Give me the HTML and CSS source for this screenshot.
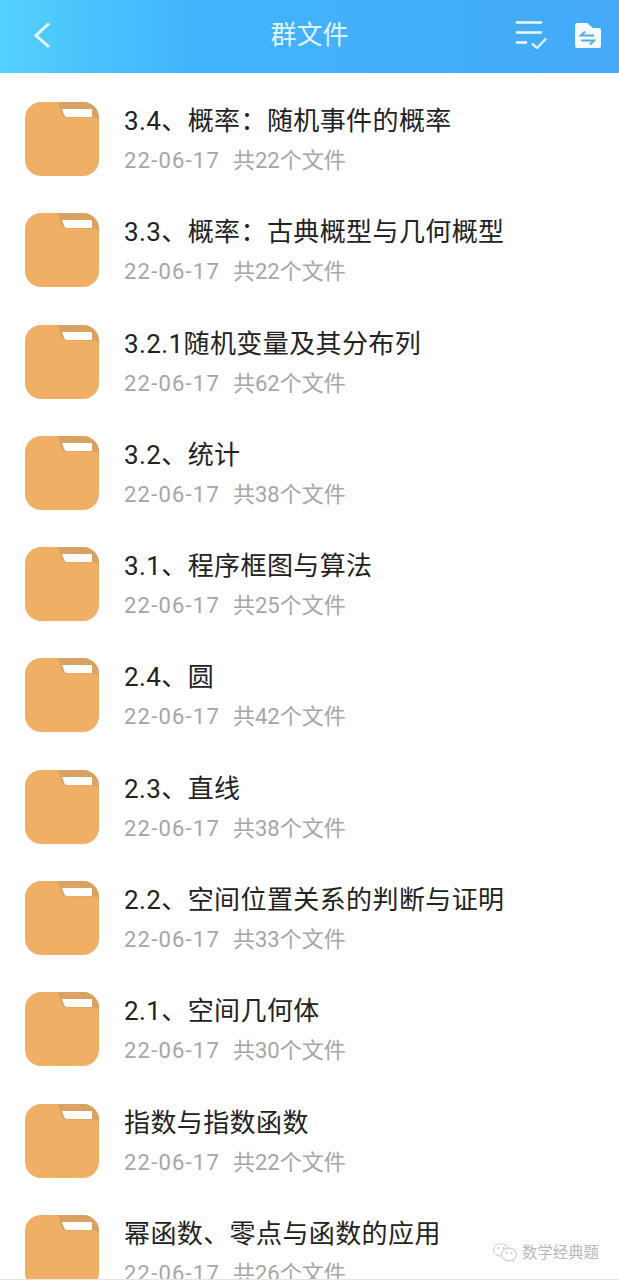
FILE: index.html
```html
<!DOCTYPE html>
<html lang="zh">

<head>
    <meta charset="UTF-8">
    <meta name="viewport" content="width=device-width, initial-scale=1.0">
    <title>群文件</title>
    <link rel="stylesheet" href="styles.css">
</head>

<body>
    <svg class="sprite" width="0" height="0">
        <symbol id="folder" viewBox="0 0 74 74">
            <rect width="74" height="74" rx="16" fill="#efb066"/>
            <path d="M33 0H58A16 16 0 0 1 74 16V18Q72 15.500 68 15.500H42Q37 15.500 36 11Z" fill="#d9a262"/>
            <path d="M37 7H67V15H42Q40 15 39 12.500Z" fill="#fff"/>
        </symbol>
    </svg>

    <header class="top-bar">
        <svg class="back-icon" width="18" height="28" viewBox="0 0 18 28">
            <path d="M17 2.500 4 14.500 17 26" fill="none" stroke="#eaf7ff" stroke-width="3"/>
        </svg>
        <h1 class="top-title">群文件</h1>
        <div class="top-actions">
            <svg width="32" height="28" viewBox="0 0 32 28">
                <path d="M1 1.500H27M1 11.500H27M1 21.500H12" fill="none" stroke="#eef8ff" stroke-width="2.500"/>
                <path d="M17 22.500 22 27 31 17.500" fill="none" stroke="#d5eeff" stroke-width="2.500"/>
            </svg>
            <svg width="28" height="26" viewBox="0 -1 28 26">
                <path d="M1 2Q1 0 3 0H13L19 5H25Q27 5 27 7V23Q27 25 25 25H3Q1 25 1 23Z" fill="#f2faff"/>
                <path d="M20 12.500H7L11 8.500M7 17.500H20L16 21.500" fill="none" stroke="#5aa9e6" stroke-width="2"/>
            </svg>
        </div>
    </header>

    <ul class="file-list">
        <li class="file-row">
            <svg class="folder-icon"><use href="#folder"/></svg>
            <div class="file-info">
                <div class="file-name">3.4、概率：随机事件的概率</div>
                <div class="file-meta">22-06-17<span class="file-count">共22个文件</span></div>
            </div>
        </li>
        <li class="file-row">
            <svg class="folder-icon"><use href="#folder"/></svg>
            <div class="file-info">
                <div class="file-name">3.3、概率：古典概型与几何概型</div>
                <div class="file-meta">22-06-17<span class="file-count">共22个文件</span></div>
            </div>
        </li>
        <li class="file-row">
            <svg class="folder-icon"><use href="#folder"/></svg>
            <div class="file-info">
                <div class="file-name">3.2.1随机变量及其分布列</div>
                <div class="file-meta">22-06-17<span class="file-count">共62个文件</span></div>
            </div>
        </li>
        <li class="file-row">
            <svg class="folder-icon"><use href="#folder"/></svg>
            <div class="file-info">
                <div class="file-name">3.2、统计</div>
                <div class="file-meta">22-06-17<span class="file-count">共38个文件</span></div>
            </div>
        </li>
        <li class="file-row">
            <svg class="folder-icon"><use href="#folder"/></svg>
            <div class="file-info">
                <div class="file-name">3.1、程序框图与算法</div>
                <div class="file-meta">22-06-17<span class="file-count">共25个文件</span></div>
            </div>
        </li>
        <li class="file-row">
            <svg class="folder-icon"><use href="#folder"/></svg>
            <div class="file-info">
                <div class="file-name">2.4、圆</div>
                <div class="file-meta">22-06-17<span class="file-count">共42个文件</span></div>
            </div>
        </li>
        <li class="file-row">
            <svg class="folder-icon"><use href="#folder"/></svg>
            <div class="file-info">
                <div class="file-name">2.3、直线</div>
                <div class="file-meta">22-06-17<span class="file-count">共38个文件</span></div>
            </div>
        </li>
        <li class="file-row">
            <svg class="folder-icon"><use href="#folder"/></svg>
            <div class="file-info">
                <div class="file-name">2.2、空间位置关系的判断与证明</div>
                <div class="file-meta">22-06-17<span class="file-count">共33个文件</span></div>
            </div>
        </li>
        <li class="file-row">
            <svg class="folder-icon"><use href="#folder"/></svg>
            <div class="file-info">
                <div class="file-name">2.1、空间几何体</div>
                <div class="file-meta">22-06-17<span class="file-count">共30个文件</span></div>
            </div>
        </li>
        <li class="file-row">
            <svg class="folder-icon"><use href="#folder"/></svg>
            <div class="file-info">
                <div class="file-name">指数与指数函数</div>
                <div class="file-meta">22-06-17<span class="file-count">共22个文件</span></div>
            </div>
        </li>
        <li class="file-row">
            <svg class="folder-icon"><use href="#folder"/></svg>
            <div class="file-info">
                <div class="file-name">幂函数、零点与函数的应用</div>
                <div class="file-meta">22-06-17<span class="file-count">共26个文件</span></div>
            </div>
        </li>
    </ul>

    <div class="watermark">
        <svg width="24" height="20" viewBox="0 0 24 20">
            <g fill="none" stroke="#c6c6c6" stroke-width="1">
                <path d="M8 13C3.500 13 .5 10.500 .5 7 .5 3.500 4 .8 8 .8 11.500 .8 14.500 2.500 15.500 5.500"/>
                <ellipse cx="16" cy="11.500" rx="7.500" ry="6.500"/>
                <path d="M20 17 21 19.500"/>
            </g>
            <g fill="#c6c6c6">
                <circle cx="5.500" cy="5" r="1"/>
                <circle cx="10.500" cy="5" r="1"/>
                <circle cx="13.500" cy="10" r=".9"/>
                <circle cx="18.500" cy="10" r=".9"/>
            </g>
        </svg>
        <span>数学经典题</span>
    </div>

    <div class="bottom-line"></div>
</body>

</html>
```

FILE: styles.css
```css
html,
body {
    margin: 0;
    padding: 0;
    height: 1280px;
    overflow: hidden;
}

body {
    position: relative;
    background-color: #fff;
    font-family: Roboto, "Noto Sans CJK SC", sans-serif;
}

.sprite {
    display: block;
}

.top-bar {
    display: flex;
    align-items: center;
    justify-content: space-between;
    height: 73px;
    padding: 0 17px 4px 32px;
    box-sizing: border-box;
    background: linear-gradient(90deg, #52d2fd 0%, #42b4fd 30%, #44aaf9 100%);
}

.back-icon {
    display: block;
}

.top-title {
    position: absolute;
    left: 0;
    right: 0;
    top: 16px;
    margin: 0;
    text-align: center;
    font-size: 26px;
    line-height: 38px;
    font-weight: 400;
    color: #e0f3ff;
}

.top-actions {
    display: flex;
    align-items: center;
    gap: 27px;
}

.top-actions svg {
    display: block;
}

.file-list {
    list-style: none;
    margin: 0;
    padding: 18px 0 0;
}

.file-row {
    display: flex;
    align-items: flex-start;
    height: 111.3px;
    padding: 11px 0 0 25px;
    box-sizing: border-box;
}

.folder-icon {
    flex: none;
    width: 74px;
    height: 74px;
}

.file-info {
    margin-left: 25px;
}

.file-name {
    margin-top: 1px;
    font-size: 26px;
    line-height: 36px;
    letter-spacing: 0.4px;
    color: #222;
}

.file-meta {
    margin-top: 6px;
    font-size: 22px;
    line-height: 32px;
    color: #a6a6a6;
    letter-spacing: 1.2px;
}

.file-count {
    margin-left: 13px;
    letter-spacing: 0;
}

.watermark {
    position: absolute;
    left: 493px;
    top: 1241px;
    display: flex;
    align-items: center;
    gap: 5px;
    font-size: 15.4px;
    line-height: 24px;
    color: #b8b8b8;
    text-shadow: 0 0 2px #fff;
}

.watermark svg {
    display: block;
}

.bottom-line {
    position: absolute;
    left: 0;
    right: 0;
    bottom: 0;
    height: 1px;
    background-color: #e4e4e4;
}
```
